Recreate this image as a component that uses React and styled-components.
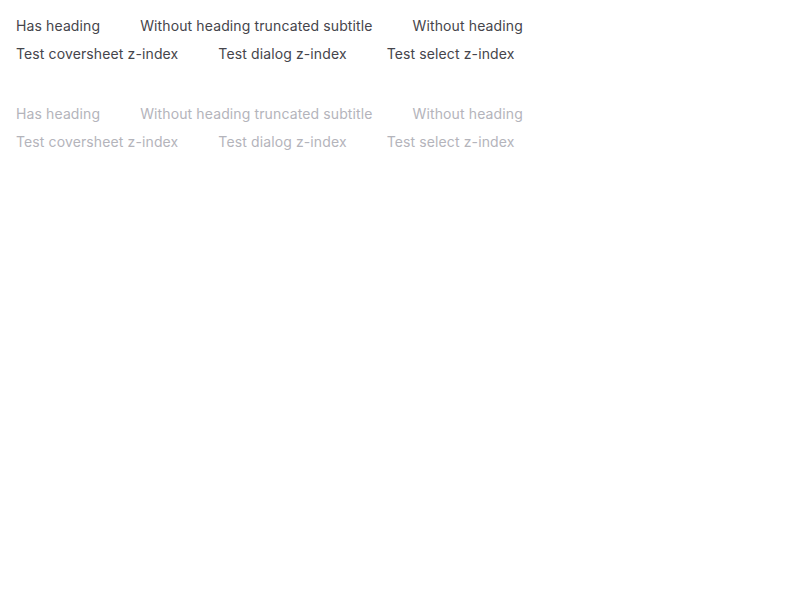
import React from "react";
import styled, { createGlobalStyle } from "styled-components";

const Global = createGlobalStyle`
  body {
    margin: 0;
    background: #fff;
    font-family: Inter, "Liberation Sans", sans-serif;
  }
`;

//style
const Page = styled.div`
  display: flex;
  flex-direction: column;
  gap: 40px;
  padding: 16px;
`;
const Group = styled.div`
  display: flex;
  flex-direction: column;
  gap: 8px;
`;
const Row = styled.div`
  display: flex;
  gap: 40px;
`;
const Trigger = styled.button`
  all: unset;
  font-family: Inter, "Liberation Sans", sans-serif;
  font-size: 14px;
  line-height: 20px;
  letter-spacing: 0.12px;
  color: ${(p) => (p.disabled ? "#b4b4bb" : "#45454b")};
  cursor: ${(p) => (p.disabled ? "default" : "pointer")};
  white-space: nowrap;
`;

const rows = [
  ["Has heading", "Without heading truncated subtitle", "Without heading"],
  ["Test coversheet z-index", "Test dialog z-index", "Test select z-index"],
];

//mark up
const Triggers = ({ disabled }) => (
  <Group>
    {rows.map((row, i) => (
      <Row key={i}>
        {row.map((label) => (
          <Trigger key={label} disabled={disabled}>
            {label}
          </Trigger>
        ))}
      </Row>
    ))}
  </Group>
);

export default function App() {
  return (
    <>
      <Global />
      <Page>
        <Triggers />
        <Triggers disabled />
      </Page>
    </>
  );
}
